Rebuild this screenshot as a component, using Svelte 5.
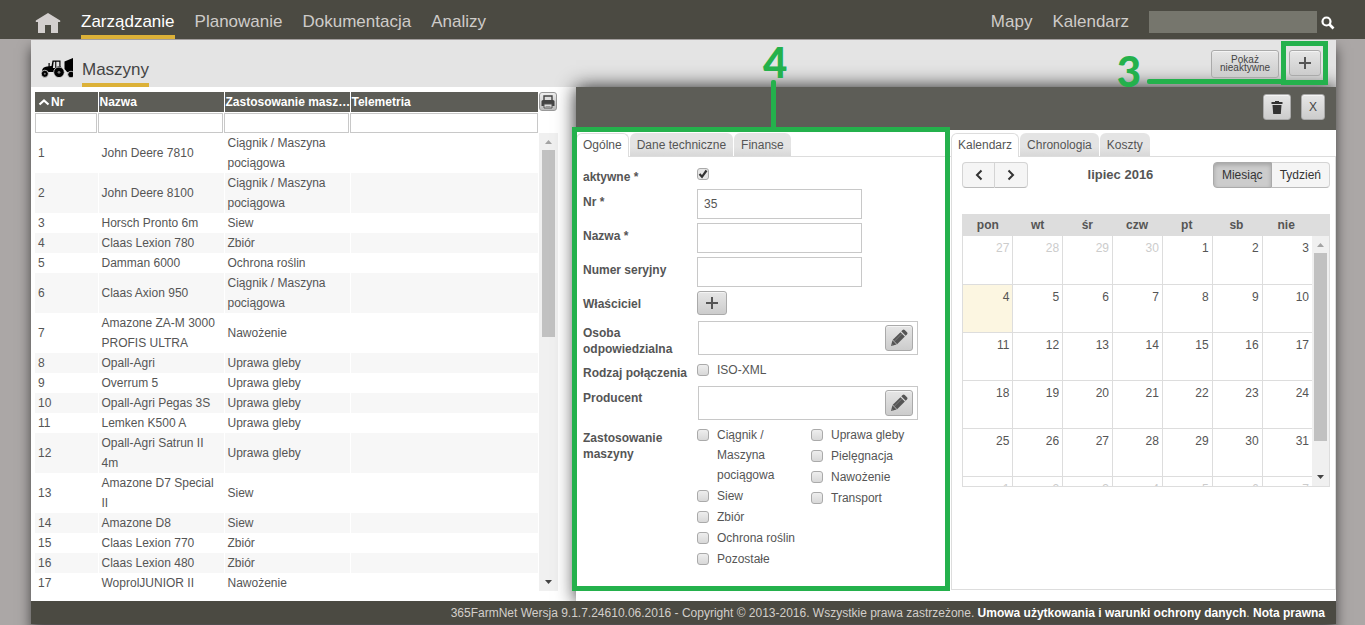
<script>
  const nav = ['Zarządzanie', 'Planowanie', 'Dokumentacja', 'Analizy'];
  const tractor = 'Ciągnik / Maszyna pociągowa';
  const machines = [
    ['John Deere 7810', tractor],
    ['John Deere 8100', tractor],
    ['Horsch Pronto 6m', 'Siew'],
    ['Claas Lexion 780', 'Zbiór'],
    ['Damman 6000', 'Ochrona roślin'],
    ['Claas Axion 950', tractor],
    ['Amazone ZA-M 3000 PROFIS ULTRA', 'Nawożenie'],
    ['Opall-Agri', 'Uprawa gleby'],
    ['Overrum 5', 'Uprawa gleby'],
    ['Opall-Agri Pegas 3S', 'Uprawa gleby'],
    ['Lemken K500 A', 'Uprawa gleby'],
    ['Opall-Agri Satrun II 4m', 'Uprawa gleby'],
    ['Amazone D7 Special II', 'Siew'],
    ['Amazone D8', 'Siew'],
    ['Claas Lexion 770', 'Zbiór'],
    ['Claas Lexion 480', 'Zbiór'],
    ['WoprolJUNIOR II', 'Nawożenie']
  ];
  const columns = ['Nr', 'Nazwa', 'Zastosowanie masz…', 'Telemetria'];
  const uses = [
    [tractor, 'Siew', 'Zbiór', 'Ochrona roślin', 'Pozostałe'],
    ['Uprawa gleby', 'Pielęgnacja', 'Nawożenie', 'Transport']
  ];
  const weekdays = ['pon', 'wt', 'śr', 'czw', 'pt', 'sb', 'nie'];
  const firstDay = Date.UTC(2016, 5, 27);
  const weeks = Array.from({ length: 6 }, (_, w) =>
    Array.from({ length: 7 }, (_, d) => {
      const date = new Date(firstDay + (w * 7 + d) * 86400000);
      const inMonth = date.getUTCMonth() === 6;
      return { day: date.getUTCDate(), muted: !inMonth, today: inMonth && date.getUTCDate() === 4 };
    })
  );
  let active = $state(true);
  let number = $state('35');
</script>

{#snippet plus()}
  <svg width="14" height="14" viewBox="0 0 14 14" aria-hidden="true"><path d="M1 7h12M7 1v12" stroke="#555" stroke-width="2" /></svg>
{/snippet}

{#snippet pencil()}
  <svg width="18" height="18" viewBox="0 0 18 18" aria-hidden="true">
    <g transform="translate(1 17) rotate(-45)" fill="#555">
      <path d="M0 0L5-3v6z" />
      <path d="M5.600-3.100H16.500v6.200H5.600z" />
      <path d="M17.600-3.100H19.500q1.500 0 1.500 1.500v3.200q0 1.500-1.500 1.500H17.600z" />
      <path d="M6-1h10M1.800-1.100v2.200" stroke="#8a8a8a" stroke-width=".7" />
    </g>
  </svg>
{/snippet}

{#snippet scrollbar(share)}
  <div class="scrollbar" aria-hidden="true">
    <svg width="9" height="17" viewBox="0 0 9 17"><path d="M1 11l3.500-4L8 11z" fill="#a3a3a3" /></svg>
    <div class="track"><div class="thumb" style="height: {share}%"></div></div>
    <svg width="9" height="17" viewBox="0 0 9 17"><path d="M1 6l3.500 4L8 6z" fill="#444" /></svg>
  </div>
{/snippet}

{#snippet tabs(names)}
  <div class="tabs" role="tablist">
    {#each names as name, i}
      <button role="tab" class:current={i === 0} aria-selected={i === 0}>{name}</button>
    {/each}
  </div>
{/snippet}

<div class="app">
  <header>
    <nav>
      <a class="home" href="#start" aria-label="Start">
        <svg width="26" height="22" viewBox="0 0 26 22"><path d="M13 1L.8 8.500V10H3v11h7v-8h6v8h7V10h2.200V8.500z" fill="#d3cfce" /></svg>
      </a>
      {#each nav as item, i}
        <a class:current={i === 0} href="#{item}">{item}</a>
      {/each}
    </nav>
    <nav class="tools">
      <a href="#Mapy">Mapy</a>
      <a href="#Kalendarz">Kalendarz</a>
      <div class="search">
        <input type="search" aria-label="Szukaj" />
        <button aria-label="Szukaj">
          <svg width="14" height="14" viewBox="0 0 14 14"><circle cx="5.500" cy="5.500" r="4" fill="none" stroke="#fff" stroke-width="2.200" /><path d="M8.500 8.500l4 4" stroke="#fff" stroke-width="2.600" /></svg>
        </button>
      </div>
    </nav>
  </header>

  <main>
    <div class="heading">
      <svg class="tractor" width="32" height="22" viewBox="0 0 32 22" aria-hidden="true">
        <path d="M1 14.500Q1.500 11 6 10.500l4.500-.5L11.500 4.500H19.500V10l2.500 3.500V16H5L1 15.500z" fill="#000" />
        <path d="M12.700 5.800h1.500V12h-2.300zM15.300 5.800h3V10l-3 1z" fill="#e4e4e4" />
        <path d="M7.500 7h1.200v4H7.500z" fill="#000" />
        <path d="M23.500 5.500L32 2v16l-3-1q-4-1-5.500-4z" fill="#000" />
        <circle cx="3.800" cy="17.800" r="3.600" fill="#000" stroke="#e4e4e4" stroke-width=".8" />
        <circle cx="3.800" cy="17.800" r="1" fill="#777" />
        <circle cx="18" cy="16.300" r="5.300" fill="#000" stroke="#e4e4e4" stroke-width=".8" />
        <circle cx="18" cy="16.300" r="1.400" fill="#777" />
        <circle cx="30" cy="18.500" r="3.300" fill="#000" stroke="#e4e4e4" stroke-width=".8" />
      </svg>
      <h1>Maszyny</h1>
      <div class="actions">
        <button class="btn inactive">Pokaż nieaktywne</button>
        <button class="btn add" aria-label="Dodaj">{@render plus()}</button>
        <div class="mark3"><b>3</b></div>
      </div>
    </div>

    <div class="panes">
      <section class="list">
        <div class="listhead">
          <table>
            <colgroup><col class="c1" /><col class="c2" /><col class="c2" /><col /></colgroup>
            <thead>
              <tr>
                {#each columns as column, i}
                  <th>
                    {#if i === 0}<svg width="12" height="8" viewBox="0 0 12 8" aria-hidden="true"><path d="M1.500 6.500L6 2.500l4.500 4" fill="none" stroke="#fff" stroke-width="2.200" /></svg>{/if}{column}
                  </th>
                {/each}
              </tr>
              <tr class="filters">
                {#each columns as column}
                  <td><input aria-label="Filtr: {column}" /></td>
                {/each}
              </tr>
            </thead>
          </table>
          <button class="print" aria-label="Drukuj">
            <svg width="16" height="16" viewBox="0 0 16 16"><path d="M4 6V2h8v4" fill="#ddd" stroke="#444" stroke-width="1.400" /><path d="M1.500 7.500Q1.500 6 3 6h10q1.500 0 1.500 1.500V12h-13z" fill="#444" /><path d="M4 10h8v4H4z" fill="#ddd" stroke="#555" /><path d="M5.500 12.500h5" stroke="#999" /></svg>
          </button>
        </div>
        <div class="listbody">
          <div class="rows">
            <table>
              <colgroup><col class="c1" /><col class="c2" /><col class="c2" /><col /></colgroup>
              <tbody>
                {#each machines as [name, use], i}
                  <tr><td>{i + 1}</td><td>{name}</td><td>{use}</td><td></td></tr>
                {/each}
              </tbody>
            </table>
          </div>
          {@render scrollbar(44)}
        </div>
      </section>

      <section class="detail">
        <div class="bar">
          <button class="btn trash" aria-label="Usuń">
            <svg width="12" height="13" viewBox="0 0 12 13"><path d="M4 1V0h4v1h3.500v2H.5V1zM1.500 4h9l-.7 9H2.200z" fill="#333" /></svg>
          </button>
          <button class="btn close">X</button>
        </div>
        <div class="split">
          <div class="machine">
            {@render tabs(['Ogólne', 'Dane techniczne', 'Finanse'])}
            <form>
              <div class="field short">
                <label for="active">aktywne *</label>
                <div class="check"><input id="active" type="checkbox" bind:checked={active} /></div>
              </div>
              <div class="field">
                <label for="number">Nr *</label>
                <input id="number" class="text" bind:value={number} />
              </div>
              <div class="field">
                <label for="name">Nazwa *</label>
                <input id="name" class="text" />
              </div>
              <div class="field">
                <label for="serial">Numer seryjny</label>
                <input id="serial" class="text" />
              </div>
              <div class="field owner">
                <label for="owner">Właściciel</label>
                <button id="owner" type="button" class="btn">{@render plus()}</button>
              </div>
              <div class="field pick">
                <label for="person">Osoba odpowiedzialna</label>
                <div class="picker"><input id="person" /><button type="button" class="btn" aria-label="Edytuj osobę">{@render pencil()}</button></div>
              </div>
              <div class="field short">
                <span class="name">Rodzaj połączenia</span>
                <label class="check"><input type="checkbox" />ISO-XML</label>
              </div>
              <div class="field pick">
                <label for="maker">Producent</label>
                <div class="picker"><input id="maker" /><button type="button" class="btn" aria-label="Edytuj producenta">{@render pencil()}</button></div>
              </div>
              <div class="field">
                <span class="name">Zastosowanie maszyny</span>
                <div class="uses">
                  {#each uses as group}
                    <div>
                      {#each group as use}
                        <label class="check"><input type="checkbox" />{use}</label>
                      {/each}
                    </div>
                  {/each}
                </div>
              </div>
            </form>
            <div class="mark4"><b>4</b></div>
          </div>

          <div class="planner">
            {@render tabs(['Kalendarz', 'Chronologia', 'Koszty'])}
            <div class="calendar">
              <div class="calbar">
                <div class="group arrows">
                  <button aria-label="Poprzedni"><svg width="8" height="12" viewBox="0 0 8 12"><path d="M6.500 1.500L2 6l4.500 4.500" fill="none" stroke="#333" stroke-width="2" /></svg></button>
                  <button aria-label="Następny"><svg width="8" height="12" viewBox="0 0 8 12"><path d="M1.500 1.500L6 6l-4.500 4.500" fill="none" stroke="#333" stroke-width="2" /></svg></button>
                </div>
                <h2>lipiec 2016</h2>
                <div class="group views">
                  <button class="pressed">Miesiąc</button>
                  <button>Tydzień</button>
                </div>
              </div>
              <div class="month">
                <table class="days">
                  <thead><tr>{#each weekdays as day}<th>{day}</th>{/each}</tr></thead>
                </table>
                <div class="weeks">
                  <table class="days">
                    <tbody>
                      {#each weeks as week}
                        <tr>{#each week as { day, muted, today }}<td class:muted class:today>{day}</td>{/each}</tr>
                      {/each}
                    </tbody>
                  </table>
                  {@render scrollbar(87)}
                </div>
              </div>
            </div>
          </div>
        </div>
      </section>
    </div>

    <footer>
      365FarmNet Wersja 9.1.7.24610.06.2016 - Copyright © 2013-2016. Wszystkie prawa zastrzeżone.
      <a href="#umowa">Umowa użytkowania i warunki ochrony danych</a>. <a href="#nota">Nota prawna</a>
    </footer>
  </main>
</div>

<style>
  :global(body) { background: #aba7a6; }
  .app, .app * { box-sizing: border-box; }
  .app { height: 100vh; min-height: 600px; display: flex; flex-direction: column; gap: 1px; padding-bottom: 1px; font: 12px/20px "Liberation Sans", Arial, sans-serif; color: #555; }
  button, input { font: inherit; color: inherit; margin: 0; }
  button { padding: 0; cursor: pointer; }
  svg { display: block; }
  a { text-decoration: none; }
  table { border-collapse: collapse; table-layout: fixed; width: 100%; }

  header { height: 39px; flex: none; position: relative; background: #4b4a42; display: flex; justify-content: space-between; padding: 0 30px 0 35px; }
  nav { display: flex; gap: 20px; height: 39px; }
  nav a { color: #cfccc9; font-size: 17px; line-height: 20px; padding-top: 12px; border-bottom: 4px solid transparent; }
  nav a.current { color: #fff; border-color: #dcb138; }
  .search { display: flex; align-items: center; gap: 4px; }
  .search input { width: 168px; height: 22px; border: 0; background: #76766d; margin-top: 4px; }
  .search button { border: 0; background: none; margin-top: 6px; }

  main { flex: 1; min-height: 0; margin: 0 29px 0 31px; display: flex; flex-direction: column; background: #fff; box-shadow: 0 8px 12px rgba(0, 0, 0, .6); }
  .heading { height: 47px; flex: none; display: flex; gap: 9px; padding-left: 10px; background: #e4e4e4; }
  .tractor { margin-top: 16px; }
  h1 { margin: 0; font-size: 17px; font-weight: 400; line-height: 20px; color: #444; padding-top: 20px; border-bottom: 4px solid #dcb138; }
  .actions { margin-left: auto; padding: 10px 15px 0 0; display: flex; align-items: flex-start; gap: 10px; position: relative; z-index: 2; }
  .btn { border: 1px solid #aaa; border-radius: 3px; background: linear-gradient(#e6e6e6, #ccc); box-shadow: inset 0 1px #f4f4f4; color: #444; display: flex; align-items: center; justify-content: center; }
  .inactive { width: 68px; height: 28px; font-size: 10px; line-height: 8px; }
  .add { width: 32px; height: 26px; }
  .mark3 { position: absolute; top: 1px; right: 8px; width: 47px; height: 44px; border: 5px solid #24b14c; pointer-events: none; }
  .mark3::before { content: ''; position: absolute; right: 37px; bottom: -4px; width: 139px; height: 5px; background: #24b14c; border-radius: 2px; }
  .mark3 b, .mark4 b { position: absolute; font: 900 42px/42px Lato, sans-serif; color: #24b14c; }
  .mark3 b { right: 182px; top: 4px; }

  .panes { flex: 1; min-height: 0; display: grid; grid-template-columns: 545fr 760fr; grid-template-rows: minmax(0, 1fr); }
  .list { min-width: 0; display: flex; flex-direction: column; padding: 5px 17px 10px 4px; }
  .listhead, .listbody { display: flex; }
  .c1 { width: 63px; }
  .c2 { width: 126px; }
  .listhead table, .rows { flex: 1; min-width: 0; }
  .listhead th { height: 20px; padding: 0 0 0 1px; background: #5d5d57; background-clip: padding-box; border-right: 1px solid #fff; color: #fff; text-align: left; white-space: nowrap; overflow: hidden; }
  .listhead th svg { display: inline-block; margin: 0 1px 0 2px; }
  .filters td { padding: 1px 1px 0 0; }
  .filters input { display: block; width: 100%; height: 20px; border: 1px solid #c8c8c8; padding: 0 3px; }
  .print { width: 18px; height: 19px; border: 1px solid #999; border-radius: 3px; background: linear-gradient(#eee, #bbb); margin-right: 2px; }
  .listbody { flex: 1; min-height: 0; }
  .rows { overflow: hidden; }
  .rows td { padding: 0 3px; border-right: 1px solid #fff; background-clip: padding-box; }
  .rows tr:nth-child(even) td { background-color: #f7f7f7; }
  .scrollbar { width: 19px; flex: none; background: #f0f0f0; display: flex; flex-direction: column; align-items: center; }
  .track { flex: 1; width: 13px; }
  .thumb { background: #c1c1c1; }
  .listbody .scrollbar { margin-right: 1px; }

  .detail { min-width: 0; display: flex; flex-direction: column; background: #fff; box-shadow: 0 0 18px #222; clip-path: inset(-90px 0 0 -30px); }
  .bar { height: 43px; flex: none; background: #5d5d57; display: flex; justify-content: flex-end; gap: 10px; padding: 7px 11px 0 0; }
  .bar .btn { height: 26px; width: 28px; }
  .bar .close { width: 24px; }
  .split { flex: 1; min-height: 0; display: grid; grid-template-columns: 375fr 385fr; padding: 3px 0 11px; }
  .machine { min-width: 0; position: relative; }
  .planner { min-width: 0; display: flex; flex-direction: column; }
  .tabs { display: flex; gap: 1px; height: 24px; border-bottom: 1px solid #ddd; }
  .tabs button { height: 23px; padding: 0 7px; border: 0; border-radius: 6px 6px 0 0; background: linear-gradient(#e4e4e4 60%, #d8d8d8); }
  .tabs .current { height: 24px; padding: 0 6px 1px; border: 1px solid #ddd; border-bottom: 0; background: #fff; }
  form { padding: 7px 7px 0; }
  .field { display: grid; grid-template-columns: 114px 1fr; min-height: 34px; align-items: start; }
  .field > label:first-child, .name { font-weight: 700; line-height: 16px; padding-top: 5px; }
  .short { min-height: 25px; }
  .owner { min-height: 29px; }
  .owner .btn { width: 30px; height: 24px; }
  .pick { min-height: 40px; }
  .text { width: 165px; height: 30px; padding: 0 6px; border: 1px solid #c8c8c8; }
  .picker { width: 220px; height: 34px; margin: 1px; border: 1px solid #c8c8c8; display: flex; align-items: center; padding-right: 4px; }
  .picker input { flex: 1; min-width: 0; border: 0; outline: 0; }
  .picker .btn { width: 28px; height: 26px; }
  .check { display: flex; gap: 8px; align-items: flex-start; }
  .check input { appearance: none; flex: none; width: 12px; height: 12px; margin-top: 4px; border: 1px solid #aaa; border-radius: 3px; background: linear-gradient(#eee, #d8d8d8); }
  .check input:checked { background: url("data:image/svg+xml,%3Csvg xmlns='http://www.w3.org/2000/svg' viewBox='0 0 10 10'%3E%3Cpath d='M1.500 5l2.500 2.800L8.500 1.500' fill='none' stroke='%23333' stroke-width='2.200'/%3E%3C/svg%3E") #e6e6e6; }
  .uses { display: grid; grid-template-columns: 100px 1fr; column-gap: 14px; }
  .uses > div { display: flex; flex-direction: column; gap: 1px; }
  .mark4 { position: absolute; inset: -6px 1px -1px -4px; border: 5px solid #24b14c; pointer-events: none; }
  .mark4::before { content: ''; position: absolute; left: 194px; bottom: 100%; width: 5px; height: 52px; background: #24b14c; border-radius: 2px 2px 0 0; }
  .mark4 b { left: 186px; top: -91px; }

  .calendar { flex: 1; border: 1px solid #ddd; border-top: 0; padding: 5px 5px 0 10px; }
  .calbar { display: flex; justify-content: space-between; align-items: center; }
  .calbar h2 { margin: 0; font-size: 13px; line-height: 20px; }
  .group { display: flex; }
  .group button { height: 26px; padding: 0 7px; border: 1px solid #d4d4d4; border-bottom-color: #bbb; background: #f5f5f5; color: #333; }
  .group button + button { border-left: 0; }
  .group button:first-child { border-radius: 4px 0 0 4px; }
  .group button:last-child { border-radius: 0 4px 4px 0; }
  .arrows button { width: 33px; display: flex; align-items: center; justify-content: center; }
  .views button { padding: 0 8px; }
  .group .pressed { background: #ccc; border-color: #aaa; box-shadow: inset 0 2px 4px rgba(0, 0, 0, .2); }
  .month { margin-top: 26px; border: 1px solid #ddd; border-top: 0; }
  .month > .days { background: #ddd; }
  .month > .days thead { display: block; padding-right: 18px; }
  .month > .days tr { display: flex; }
  .days th { flex: 1; padding: 1px 0; }
  .weeks { display: flex; height: 250px; overflow: hidden; }
  .weeks .days { flex: 1; min-width: 0; align-self: flex-start; }
  .weeks td { height: 48px; padding: 2px 3px 0 0; text-align: right; vertical-align: top; border-right: 1px solid #ddd; border-bottom: 1px solid #ddd; }
  .weeks td:last-child { border-right: 0; }
  .weeks .muted { color: #ccc; }
  .weeks .today { background: #fcf6e1; }
  .weeks .scrollbar { width: 17px; }

  footer { height: 23px; flex: none; position: relative; background: #4b4a42; color: #d3cfcb; padding: 2px 11px 0; text-align: right; }
  footer a { color: #fff; font-weight: 700; }
</style>
